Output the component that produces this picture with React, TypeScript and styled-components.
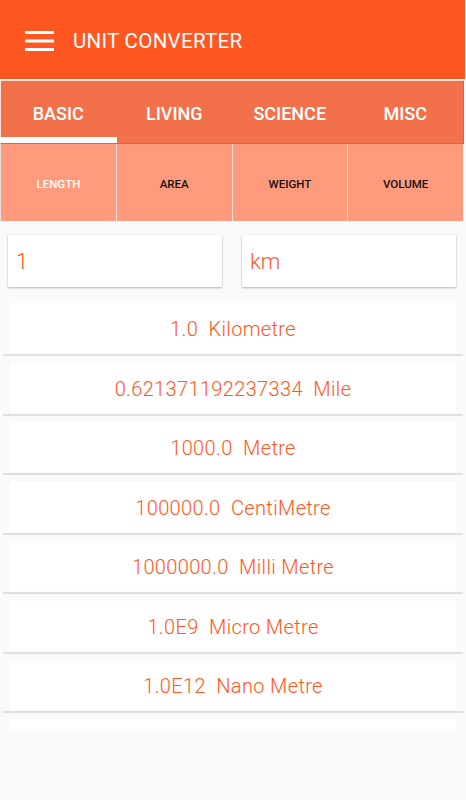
import React from 'react'
import styled, { createGlobalStyle } from 'styled-components'

const ORANGE = '#FF5722'

const GlobalStyle = createGlobalStyle`
  html, body {
    margin: 0;
    padding: 0;
    background: #fafafa;
    font-family: Roboto, 'Noto Sans', sans-serif;
  }
`

const Screen = styled.div`
  width: 466px;
  height: 800px;
  overflow: hidden;
  background: #fafafa;
`

const Toolbar = styled.header`
  display: flex;
  align-items: center;
  height: 79px;
  width: 465px;
  background: ${ORANGE};
  box-sizing: border-box;
  padding: 3px 0 0 25px;
  gap: 19px;
`

const Title = styled.h1`
  margin: 0;
  font-size: 20.5px;
  font-weight: 400;
  color: #fff;
  letter-spacing: 0.3px;
`

const TabBar = styled.nav`
  display: grid;
  grid-template-columns: repeat(4, 1fr);
  width: 464px;
  height: 64px;
  margin-top: 1px;
  box-sizing: border-box;
  background: #f2714a;
  border-top: 1px solid #fde4da;
  border-left: 1px solid #fde4da;
  border-right: 1px solid ${ORANGE};
  border-bottom: 1px solid ${ORANGE};
`

const Tab = styled.div<{ $active?: boolean }>`
  display: flex;
  align-items: center;
  justify-content: center;
  box-sizing: border-box;
  padding-top: ${(p) => (p.$active ? '8px' : '2px')};
  border-bottom: ${(p) => (p.$active ? '6px solid #fff' : 'none')};
  margin-left: ${(p) => (p.$active ? '-1px' : '0')};
  font-size: 18px;
  font-weight: 500;
  color: #fff;
`

const SubTabs = styled.div`
  display: grid;
  grid-template-columns: repeat(4, 1fr);
  width: 463px;
  height: 77px;
  background: #ff9b7c;
`

const SubTab = styled.div<{ $active?: boolean }>`
  display: flex;
  align-items: center;
  justify-content: center;
  border-left: 1px solid #e8ddd8;
  font-size: 11.5px;
  font-weight: 500;
  padding-top: 2px;
  color: ${(p) => (p.$active ? '#fff' : '#111')};
`

const Inputs = styled.div`
  display: grid;
  grid-template-columns: 214px 214px;
  gap: 20px;
  padding: 14px 0 0 8px;
`

const Field = styled.div`
  height: 52px;
  display: flex;
  align-items: center;
  padding-left: 8px;
  box-sizing: border-box;
  background: #fff;
  box-shadow: 0 1px 2px rgba(0, 0, 0, 0.25), 0 0 1px rgba(0, 0, 0, 0.12);
  font-size: 22px;
  font-weight: 300;
  color: ${ORANGE};
`

const List = styled.div`
  margin-top: 16px;
  height: 428px;
  overflow: hidden;
`

const Row = styled.div`
  margin: 0 3px 6.5px;
  padding: 0 7px 1px;
  border-bottom: 2px solid #e0e0e0;
`

const RowBody = styled.div`
  height: 50px;
  box-sizing: border-box;
  padding-top: 2px;
  display: flex;
  align-items: center;
  justify-content: center;
  background: #fff;
  font-size: 20px;
  font-weight: 300;
  color: ${ORANGE};
  white-space: pre;
  letter-spacing: 0.35px;
`

function MenuIcon() {
  return (
    <svg width="29" height="20" viewBox="0 0 29 20">
      <rect x="0" y="0" width="29" height="3" fill="#fff" />
      <rect x="0" y="8.5" width="29" height="3" fill="#fff" />
      <rect x="0" y="17" width="29" height="3" fill="#fff" />
    </svg>
  )
}

const tabs = ['BASIC', 'LIVING', 'SCIENCE', 'MISC']
const subTabs = ['LENGTH', 'AREA', 'WEIGHT', 'VOLUME']

// the last entry is scrolled just into view, so its label is still below the fold
const results: [string, string][] = [
  ['1.0', 'Kilometre'],
  ['0.621371192237334', 'Mile'],
  ['1000.0', 'Metre'],
  ['100000.0', 'CentiMetre'],
  ['1000000.0', 'Milli Metre'],
  ['1.0E9', 'Micro Metre'],
  ['1.0E12', 'Nano Metre'],
  ['', ''],
]

export default function App() {
  return (
    <Screen>
      <GlobalStyle />
      <Toolbar>
        <MenuIcon />
        <Title>UNIT CONVERTER</Title>
      </Toolbar>

      <TabBar>
        {tabs.map((t, i) => (
          <Tab key={t} $active={i === 0}>
            {t}
          </Tab>
        ))}
      </TabBar>

      <SubTabs>
        {subTabs.map((t, i) => (
          <SubTab key={t} $active={i === 0}>
            {t}
          </SubTab>
        ))}
      </SubTabs>

      <Inputs>
        <Field>1</Field>
        <Field>km</Field>
      </Inputs>

      <List>
        {results.map(([value, unit], i) => (
          <Row key={i}>
            <RowBody>{value ? `${value}  ${unit}` : ''}</RowBody>
          </Row>
        ))}
      </List>
    </Screen>
  )
}
